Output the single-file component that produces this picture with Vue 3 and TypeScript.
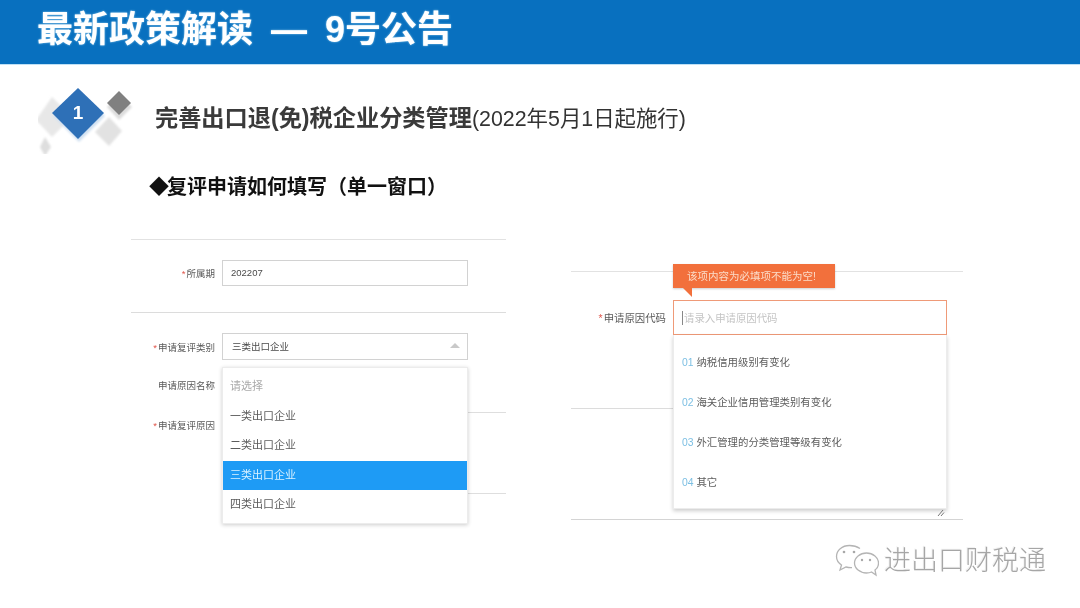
<script setup lang="ts">
const leftOptions: string[] = ['一类出口企业', '二类出口企业', '三类出口企业', '四类出口企业']
const reasons: { code: string; name: string }[] = [
  { code: '01', name: '纳税信用级别有变化' },
  { code: '02', name: '海关企业信用管理类别有变化' },
  { code: '03', name: '外汇管理的分类管理等级有变化' },
  { code: '04', name: '其它' },
]
</script>

<template>
  <div class="slide">
    <header class="banner">
      <h1>最新政策解读 — 9号公告</h1>
    </header>

    <section class="section-row">
      <svg class="badge" viewBox="38 82 100 72" width="100" height="72">
        <defs>
          <filter id="soft" x="-40%" y="-40%" width="180%" height="180%">
            <feGaussianBlur stdDeviation="1.3" />
          </filter>
          <filter id="fine" x="-20%" y="-20%" width="140%" height="140%">
            <feGaussianBlur stdDeviation="0.5" />
          </filter>
        </defs>
        <path d="M52 97 L72 117 L52 137 L36 120 Z" fill="#e8e8e8" filter="url(#soft)" />
        <path d="M109 117 L122 131 L109 146 L95 132 Z" fill="#e2e2e2" filter="url(#soft)" />
        <path d="M45 137 L51 147 L45 156 L40 147 Z" fill="#dedede" filter="url(#soft)" />
        <path d="M119 91 L132 103 L119 116 L107 103 Z" fill="#dcdcdc" filter="url(#soft)" transform="translate(0 4)" />
        <path d="M119 91 L131 103 L119 115 L107 103 Z" fill="#808080" filter="url(#fine)" />
        <path d="M79 91 L105 116 L79 142 L53 116 Z" fill="#cfdff0" filter="url(#soft)" />
        <path d="M78 88 L104 113 L78 139 L52 113 Z" fill="#2f6fb7" filter="url(#fine)" />
        <text x="78" y="119" class="badge-num" text-anchor="middle">1</text>
      </svg>
      <h2>完善出口退(免)税企业分类管理<span>(2022年5月1日起施行)</span></h2>
    </section>

    <h3 class="subhead"><span class="mark">◆</span>复评申请如何填写（单一窗口）</h3>

    <div class="panels">
      <div class="panel-left">
        <div class="rule"></div>
        <div class="row row-period">
          <label><i>*</i>所属期</label>
          <div class="field">202207</div>
        </div>
        <div class="rule rule-second"></div>
        <div class="row row-type">
          <label><i>*</i>申请复评类别</label>
          <div class="field field-select">
            <span>三类出口企业</span>
            <b class="caret"></b>
          </div>
        </div>
        <div class="row row-name">
          <label>申请原因名称</label>
        </div>
        <div class="stub stub-a"></div>
        <div class="row row-reason">
          <label><i>*</i>申请复评原因</label>
        </div>
        <div class="stub stub-b"></div>

        <ul class="menu">
          <li class="placeholder">请选择</li>
          <li v-for="o in leftOptions" :key="o" :class="{ active: o === '三类出口企业' }">{{ o }}</li>
        </ul>
      </div>

      <div class="panel-right">
        <div class="rule"></div>
        <div class="row-code">
          <label><i>*</i>申请原因代码</label>
          <div class="code-input"><s class="cursor"></s>请录入申请原因代码</div>
        </div>
        <div class="code-stub"></div>
        <div class="rule code-end"></div>

        <div class="tip">该项内容为必填项不能为空!</div>
        <ul class="code-menu">
          <li v-for="r in reasons" :key="r.code"><em>{{ r.code }}</em> {{ r.name }}</li>
        </ul>
        <svg class="grip" viewBox="0 0 8 8" width="8" height="8">
          <path d="M1 7 L6 1 M4 7 L7 3.5" stroke="#777" stroke-width="1" fill="none" />
        </svg>
      </div>
    </div>

    <div class="watermark">
      <svg viewBox="0 0 44 34" width="44" height="34">
        <g fill="none" stroke="#b4b4b4" stroke-width="1.3">
          <path d="M25 4.500 C22 2.500 18 1.500 14.500 1.500 C7 1.500 1.500 6.500 1.500 12.500 C1.500 16 3.500 19 6.500 21 L5 26 L11 23 C13 23.500 15 23.800 17 23.600" />
          <path d="M31.500 9 C25 9 19.500 13.500 19.500 19 C19.500 24.500 25 29 31.500 29 C33.500 29 35 28.700 36.500 28 L41 31 L40 26 C42.500 24.300 43.500 21.800 43.500 19 C43.500 13.500 38 9 31.500 9 Z" />
        </g>
        <g fill="#a8a8a8">
          <circle cx="9" cy="8" r="1.300" />
          <circle cx="19" cy="8" r="1.300" />
          <circle cx="27" cy="16" r="1.200" />
          <circle cx="35" cy="16" r="1.200" />
        </g>
      </svg>
      <span>进出口财税通</span>
    </div>
  </div>
</template>

<style>
html, body { margin: 0; background: #fff; }
</style>

<style scoped>
.slide {
  position: relative;
  width: 1080px;
  height: 608px;
  overflow: hidden;
  background: #fff;
  font-family: "Liberation Sans", "Noto Sans CJK SC", sans-serif;
  filter: blur(0.5px);
}
.banner {
  height: 65px;
  box-sizing: border-box;
  background: #0870bf;
  border-bottom: 1px solid #bfe0f5;
  display: flex;
  align-items: center;
  padding: 0 0 4px 37px;
}
h1 {
  margin: 0;
  color: #fff;
  font-size: 36px;
  font-weight: 700;
  line-height: 56px;
  word-spacing: 8px;
  white-space: nowrap;
  text-shadow: 0 0 2px rgba(205, 240, 255, 0.8);
}
.section-row {
  display: flex;
  align-items: center;
  gap: 17px;
  padding: 17px 0 0 38px;
}
.badge { display: block; flex: none; }
.badge-num {
  fill: #fff;
  font-size: 19px;
  font-weight: 700;
}
h2 {
  margin: 0;
  font-size: 23.200px;
  line-height: 30px;
  font-weight: 700;
  color: #3a3a3a;
  white-space: nowrap;
}
h2 span {
  font-size: 21.400px;
  font-weight: 400;
  color: #333;
}
.subhead {
  margin: 19px 0 0 149px;
  font-size: 20px;
  line-height: 28px;
  font-weight: 700;
  color: #111;
}
.mark {
  letter-spacing: -2px;
}
.panels {
  display: flex;
  gap: 65px;
  margin: 38px 0 0 131px;
}
.panel-left {
  position: relative;
  width: 375px;
}
.rule {
  height: 1px;
  background: #e2e2e2;
}
.row {
  display: grid;
  grid-template-columns: 91px 246px;
  align-items: center;
}
.row label,
.row-code label {
  text-align: right;
  padding-right: 7px;
  font-size: 9.500px;
  color: #5a5a5a;
  white-space: nowrap;
}
label i {
  font-style: normal;
  color: #e0554a;
  margin-right: 1px;
}
.row-period { margin-top: 20px; height: 26px; }
.rule-second { margin-top: 26px; background: #dcdcdc; }
.row-type { margin-top: 20px; height: 27px; }
.row-name { margin-top: 7px; height: 36px; }
.row-reason { margin-top: 4px; height: 16px; }
.field {
  box-sizing: border-box;
  height: 100%;
  border: 1px solid #d2d2d2;
  padding: 0 0 2px 8px;
  font-size: 9.500px;
  color: #4a4a4a;
  display: flex;
  align-items: center;
}
.field-select {
  justify-content: space-between;
  padding: 0 7px 2px 9px;
}
.caret {
  width: 0;
  height: 0;
  border-left: 5px solid transparent;
  border-right: 5px solid transparent;
  border-bottom: 5px solid #c9c9c9;
}
.stub {
  height: 1px;
  width: 38px;
  margin-left: 337px;
  background: #dedede;
}
.stub-a { margin-top: 9px; }
.stub-b { margin-top: 60px; }
.menu {
  position: absolute;
  left: 91px;
  top: 128px;
  width: 246px;
  height: 157px;
  box-sizing: border-box;
  margin: 0;
  padding: 4px 0 0;
  list-style: none;
  background: #fff;
  border: 1px solid #ececec;
  box-shadow: 0 1px 4px rgba(0, 0, 0, 0.2);
}
.menu li {
  height: 29.600px;
  line-height: 29.600px;
  padding-left: 7px;
  font-size: 11px;
  color: #5c5c5c;
}
.menu .placeholder { color: #aaa; }
.menu .active {
  background: #1e9bf5;
  color: #d9f1ff;
}
.panel-right {
  position: relative;
  width: 392px;
  margin-top: 32px;
}
.row-code {
  display: grid;
  grid-template-columns: 102px 274px;
  align-items: center;
  height: 35px;
  margin-top: 28px;
}
.row-code label {
  font-size: 10.400px;
}
.code-input {
  box-sizing: border-box;
  height: 35px;
  border: 1px solid #ef9a78;
  padding-left: 8px;
  display: flex;
  align-items: center;
  gap: 1px;
  font-size: 10.400px;
  color: #c4c4c4;
}
.cursor {
  width: 1px;
  height: 14px;
  background: #888;
}
.code-stub {
  width: 102px;
  height: 1px;
  margin-top: 73px;
  background: #dcdcdc;
}
.code-end {
  margin-top: 110px;
  background: #d4d4d4;
}
.tip {
  position: absolute;
  left: 102px;
  top: -7px;
  height: 24px;
  width: 162px;
  box-sizing: border-box;
  padding-left: 14px;
  background: #f2703c;
  color: #fbdcc9;
  font-size: 10.500px;
  line-height: 24px;
  box-shadow: 0 1px 2px rgba(0, 0, 0, 0.2);
  white-space: nowrap;
}
.tip::after {
  content: "";
  position: absolute;
  left: 10px;
  top: 24px;
  width: 9px;
  height: 9px;
  background: #f2703c;
  clip-path: polygon(0 0, 100% 0, 100% 100%);
}
.code-menu {
  position: absolute;
  left: 102px;
  top: 64px;
  width: 274px;
  height: 174px;
  box-sizing: border-box;
  margin: 0;
  padding: 8px 0 0 8px;
  list-style: none;
  background: #fff;
  border: 1px solid #ececec;
  border-top: 0;
  box-shadow: 0 2px 4px rgba(0, 0, 0, 0.2);
}
.code-menu li {
  height: 40px;
  line-height: 40px;
  font-size: 10.400px;
  color: #5c5c5c;
}
.code-menu em {
  font-style: normal;
  color: #7cbfe3;
}
.grip {
  position: absolute;
  left: 366px;
  top: 238px;
}
.watermark {
  position: absolute;
  left: 835px;
  top: 544px;
  display: flex;
  align-items: center;
  gap: 5px;
}
.watermark span {
  font-size: 27px;
  line-height: 34px;
  font-weight: 300;
  color: #a6a6a6;
  text-shadow: 1px 1px 0 #fff, -1px -1px 0 rgba(0, 0, 0, 0.05);
}
</style>
